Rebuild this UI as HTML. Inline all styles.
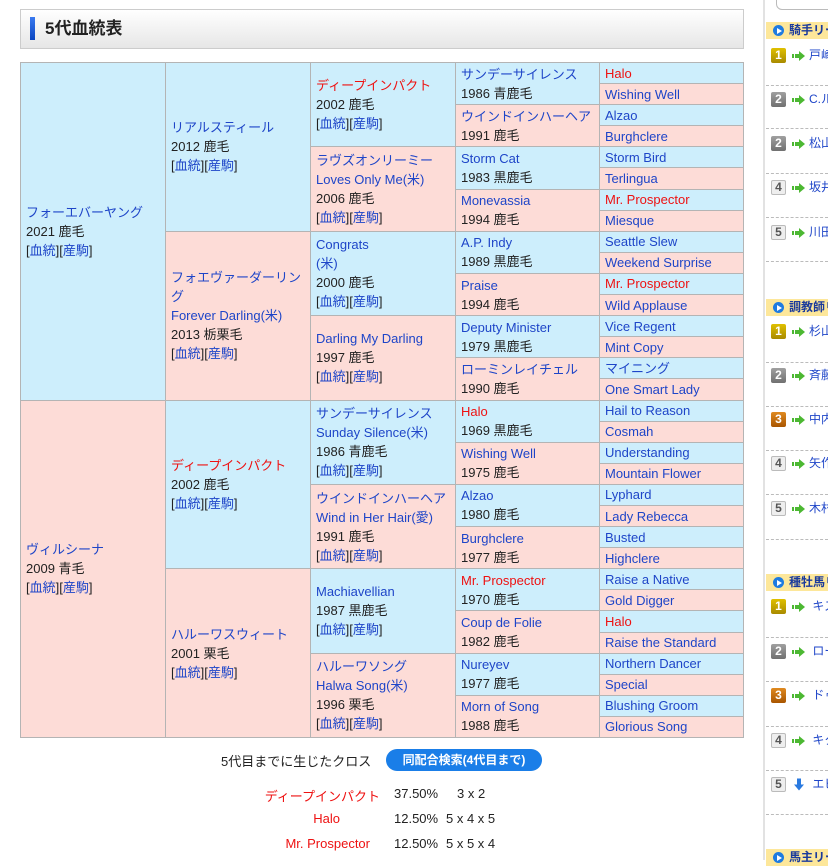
<!DOCTYPE html>
<html><head><meta charset="utf-8"><style>
*{margin:0;padding:0;box-sizing:border-box}
body{width:828px;height:860px;background:#fff;font-family:"Liberation Sans","Noto Sans CJK JP",sans-serif;position:relative;overflow:hidden;color:#222;font-size:13px}
a{color:#1e45c8;text-decoration:none}
.r{color:#ee1111}
.hdr{position:absolute;left:20px;top:9px;width:724px;height:40px;border:1px solid #ccc;background:linear-gradient(#fff,#e6e6e6)}
.hdr .bar{position:absolute;left:9px;top:7px;width:5px;height:23px;background:linear-gradient(#3a7af0,#0a45c0)}
.hdr .t{position:absolute;left:24px;top:8px;font-size:17px;line-height:22px;font-weight:bold;color:#222}
.grid{position:absolute;left:20px;top:62px;width:724px;height:676px;background:#b4b4b4;padding:1px;display:grid;grid-template-columns:144px 144px 144px 143px 143px;grid-template-rows:repeat(32,1fr);gap:1px}
.grid div{padding:0 5px;display:flex;flex-direction:column;justify-content:center;line-height:19px;font-size:13px}
.b{background:#cdeefc}.p{background:#fddcd7}
.cross{position:absolute;font-size:13px}
.btn{position:absolute;left:386px;top:749px;width:156px;height:22px;border-radius:11px;background:#1a7ee8;color:#fff;font-weight:bold;font-size:12px;text-align:center;line-height:22px}
.side{position:absolute;left:763px;top:0;width:2px;height:860px;background:#e2e2e2}
.search{position:absolute;left:776px;top:-10px;width:60px;height:20px;border:1px solid #bbb;border-radius:6px}
.sh{position:absolute;left:766px;width:62px;height:17px;background:#fde79a;font-size:12px;font-weight:bold;color:#1a3a9c;line-height:17px;padding-left:23px;white-space:nowrap;overflow:hidden}
.sh:before{content:"";position:absolute;left:7px;top:3px;width:11px;height:11px;border-radius:50%;background:#1e7be0}
.sh:after{content:"";position:absolute;left:11px;top:5.5px;border-left:5px solid #fff;border-top:3px solid transparent;border-bottom:3px solid transparent}
.it{position:absolute;left:766px;width:62px;height:20px;white-space:nowrap;overflow:hidden}
.rk{position:absolute;left:5px;top:0;width:15px;height:15px;border-radius:2px;font-size:12px;font-weight:bold;color:#fff;text-align:center;line-height:15px}
.k1{background:linear-gradient(#e0c000,#a88a00)}.k2{background:linear-gradient(#a0a0a0,#707070)}.k3{background:linear-gradient(#e08a20,#a85500)}.k4{background:#eee;border:1px solid #bbb;color:#555;line-height:13px}
.ar{position:absolute;left:26px;top:3px;width:14px;height:10px}
.nm{position:absolute;left:43px;top:0;font-size:12px;color:#1e45c8;line-height:15px}
.dl{position:absolute;left:766px;width:62px;border-top:1px dashed #bbb}
</style></head><body>
<div class="hdr"><div class="bar"></div><div class="t">5代血統表</div></div>
<div class="grid">
<div class="b" style="grid-area:1/1/span 16"><a>フォーエバーヤング</a><span>2021 鹿毛</span><span>[<a>血統</a>][<a>産駒</a>]</span></div>
<div class="p" style="grid-area:17/1/span 16"><a>ヴィルシーナ</a><span>2009 青毛</span><span>[<a>血統</a>][<a>産駒</a>]</span></div>
<div class="b" style="grid-area:1/2/span 8"><a>リアルスティール</a><span>2012 鹿毛</span><span>[<a>血統</a>][<a>産駒</a>]</span></div>
<div class="p" style="grid-area:9/2/span 8"><a>フォエヴァーダーリング</a><a>Forever Darling(米)</a><span>2013 栃栗毛</span><span>[<a>血統</a>][<a>産駒</a>]</span></div>
<div class="b" style="grid-area:17/2/span 8"><a class="r">ディープインパクト</a><span>2002 鹿毛</span><span>[<a>血統</a>][<a>産駒</a>]</span></div>
<div class="p" style="grid-area:25/2/span 8"><a>ハルーワスウィート</a><span>2001 栗毛</span><span>[<a>血統</a>][<a>産駒</a>]</span></div>
<div class="b" style="grid-area:1/3/span 4"><a class="r">ディープインパクト</a><span>2002 鹿毛</span><span>[<a>血統</a>][<a>産駒</a>]</span></div>
<div class="p" style="grid-area:5/3/span 4"><a>ラヴズオンリーミー</a><a>Loves Only Me(米)</a><span>2006 鹿毛</span><span>[<a>血統</a>][<a>産駒</a>]</span></div>
<div class="b" style="grid-area:9/3/span 4"><a>Congrats</a><a>(米)</a><span>2000 鹿毛</span><span>[<a>血統</a>][<a>産駒</a>]</span></div>
<div class="p" style="grid-area:13/3/span 4"><a>Darling My Darling</a><span>1997 鹿毛</span><span>[<a>血統</a>][<a>産駒</a>]</span></div>
<div class="b" style="grid-area:17/3/span 4"><a>サンデーサイレンス</a><a>Sunday Silence(米)</a><span>1986 青鹿毛</span><span>[<a>血統</a>][<a>産駒</a>]</span></div>
<div class="p" style="grid-area:21/3/span 4"><a>ウインドインハーヘア</a><a>Wind in Her Hair(愛)</a><span>1991 鹿毛</span><span>[<a>血統</a>][<a>産駒</a>]</span></div>
<div class="b" style="grid-area:25/3/span 4"><a>Machiavellian</a><span>1987 黒鹿毛</span><span>[<a>血統</a>][<a>産駒</a>]</span></div>
<div class="p" style="grid-area:29/3/span 4"><a>ハルーワソング</a><a>Halwa Song(米)</a><span>1996 栗毛</span><span>[<a>血統</a>][<a>産駒</a>]</span></div>
<div class="b" style="grid-area:1/4/span 2"><a>サンデーサイレンス</a><span>1986 青鹿毛</span></div>
<div class="p" style="grid-area:3/4/span 2"><a>ウインドインハーヘア</a><span>1991 鹿毛</span></div>
<div class="b" style="grid-area:5/4/span 2"><a>Storm Cat</a><span>1983 黒鹿毛</span></div>
<div class="p" style="grid-area:7/4/span 2"><a>Monevassia</a><span>1994 鹿毛</span></div>
<div class="b" style="grid-area:9/4/span 2"><a>A.P. Indy</a><span>1989 黒鹿毛</span></div>
<div class="p" style="grid-area:11/4/span 2"><a>Praise</a><span>1994 鹿毛</span></div>
<div class="b" style="grid-area:13/4/span 2"><a>Deputy Minister</a><span>1979 黒鹿毛</span></div>
<div class="p" style="grid-area:15/4/span 2"><a>ローミンレイチェル</a><span>1990 鹿毛</span></div>
<div class="b" style="grid-area:17/4/span 2"><a class="r">Halo</a><span>1969 黒鹿毛</span></div>
<div class="p" style="grid-area:19/4/span 2"><a>Wishing Well</a><span>1975 鹿毛</span></div>
<div class="b" style="grid-area:21/4/span 2"><a>Alzao</a><span>1980 鹿毛</span></div>
<div class="p" style="grid-area:23/4/span 2"><a>Burghclere</a><span>1977 鹿毛</span></div>
<div class="b" style="grid-area:25/4/span 2"><a class="r">Mr. Prospector</a><span>1970 鹿毛</span></div>
<div class="p" style="grid-area:27/4/span 2"><a>Coup de Folie</a><span>1982 鹿毛</span></div>
<div class="b" style="grid-area:29/4/span 2"><a>Nureyev</a><span>1977 鹿毛</span></div>
<div class="p" style="grid-area:31/4/span 2"><a>Morn of Song</a><span>1988 鹿毛</span></div>
<div class="b" style="grid-area:1/5"><a class="r">Halo</a></div>
<div class="p" style="grid-area:2/5"><a>Wishing Well</a></div>
<div class="b" style="grid-area:3/5"><a>Alzao</a></div>
<div class="p" style="grid-area:4/5"><a>Burghclere</a></div>
<div class="b" style="grid-area:5/5"><a>Storm Bird</a></div>
<div class="p" style="grid-area:6/5"><a>Terlingua</a></div>
<div class="b" style="grid-area:7/5"><a class="r">Mr. Prospector</a></div>
<div class="p" style="grid-area:8/5"><a>Miesque</a></div>
<div class="b" style="grid-area:9/5"><a>Seattle Slew</a></div>
<div class="p" style="grid-area:10/5"><a>Weekend Surprise</a></div>
<div class="b" style="grid-area:11/5"><a class="r">Mr. Prospector</a></div>
<div class="p" style="grid-area:12/5"><a>Wild Applause</a></div>
<div class="b" style="grid-area:13/5"><a>Vice Regent</a></div>
<div class="p" style="grid-area:14/5"><a>Mint Copy</a></div>
<div class="b" style="grid-area:15/5"><a>マイニング</a></div>
<div class="p" style="grid-area:16/5"><a>One Smart Lady</a></div>
<div class="b" style="grid-area:17/5"><a>Hail to Reason</a></div>
<div class="p" style="grid-area:18/5"><a>Cosmah</a></div>
<div class="b" style="grid-area:19/5"><a>Understanding</a></div>
<div class="p" style="grid-area:20/5"><a>Mountain Flower</a></div>
<div class="b" style="grid-area:21/5"><a>Lyphard</a></div>
<div class="p" style="grid-area:22/5"><a>Lady Rebecca</a></div>
<div class="b" style="grid-area:23/5"><a>Busted</a></div>
<div class="p" style="grid-area:24/5"><a>Highclere</a></div>
<div class="b" style="grid-area:25/5"><a>Raise a Native</a></div>
<div class="p" style="grid-area:26/5"><a>Gold Digger</a></div>
<div class="b" style="grid-area:27/5"><a class="r">Halo</a></div>
<div class="p" style="grid-area:28/5"><a>Raise the Standard</a></div>
<div class="b" style="grid-area:29/5"><a>Northern Dancer</a></div>
<div class="p" style="grid-area:30/5"><a>Special</a></div>
<div class="b" style="grid-area:31/5"><a>Blushing Groom</a></div>
<div class="p" style="grid-area:32/5"><a>Glorious Song</a></div>
</div>

<div class="cross" style="left:221px;top:751px">5代目までに生じたクロス</div>
<div class="btn">同配合検索(4代目まで)</div>
<div class="cross r" style="left:200px;width:180px;text-align:right;top:786px">ディープインパクト</div>
<div class="cross" style="left:394px;top:786px">37.50%</div><div class="cross" style="left:457px;top:786px">3 x 2</div>
<div class="cross r" style="left:200px;width:140px;text-align:right;top:811px">Halo</div>
<div class="cross" style="left:394px;top:811px">12.50%</div><div class="cross" style="left:446px;top:811px">5 x 4 x 5</div>
<div class="cross r" style="left:200px;width:170px;text-align:right;top:836px">Mr. Prospector</div>
<div class="cross" style="left:394px;top:836px">12.50%</div><div class="cross" style="left:446px;top:836px">5 x 5 x 4</div>

<div class="side"></div>
<div class="search"></div>
<div class="sh" style="top:22px">騎手リーディング</div>
<div class="sh" style="top:299px">調教師リーディング</div>
<div class="sh" style="top:574px">種牡馬リーディング</div>
<div class="sh" style="top:849px">馬主リーディング</div>

<svg width="0" height="0" style="position:absolute"><defs><g id="ga"><rect x="0" y="3" width="2" height="4" fill="#4cb832"/><rect x="3" y="3" width="4" height="4" fill="#4cb832"/><path d="M7 0 L13 5 L7 10 Z" fill="#4cb832"/></g></defs></svg>

<div class="it" style="top:48px"><div class="rk k1">1</div><svg class="ar"><use href="#ga"/></svg><div class="nm">戸崎圭太</div></div>
<div class="dl" style="top:85px"></div>
<div class="it" style="top:92px"><div class="rk k2">2</div><svg class="ar"><use href="#ga"/></svg><div class="nm">C.ルメール</div></div>
<div class="dl" style="top:128px"></div>
<div class="it" style="top:136px"><div class="rk k2">2</div><svg class="ar"><use href="#ga"/></svg><div class="nm">松山弘平</div></div>
<div class="dl" style="top:173px"></div>
<div class="it" style="top:180px"><div class="rk k4">4</div><svg class="ar"><use href="#ga"/></svg><div class="nm">坂井瑠星</div></div>
<div class="dl" style="top:217px"></div>
<div class="it" style="top:225px"><div class="rk k4">5</div><svg class="ar"><use href="#ga"/></svg><div class="nm">川田将雅</div></div>
<div class="dl" style="top:261px"></div>

<div class="it" style="top:324px"><div class="rk k1">1</div><svg class="ar"><use href="#ga"/></svg><div class="nm">杉山晴紀</div></div>
<div class="dl" style="top:362px"></div>
<div class="it" style="top:368px"><div class="rk k2">2</div><svg class="ar"><use href="#ga"/></svg><div class="nm">斉藤崇史</div></div>
<div class="dl" style="top:406px"></div>
<div class="it" style="top:412px"><div class="rk k3">3</div><svg class="ar"><use href="#ga"/></svg><div class="nm">中内田充正</div></div>
<div class="dl" style="top:450px"></div>
<div class="it" style="top:456px"><div class="rk k4">4</div><svg class="ar"><use href="#ga"/></svg><div class="nm">矢作芳人</div></div>
<div class="dl" style="top:494px"></div>
<div class="it" style="top:501px"><div class="rk k4">5</div><svg class="ar"><use href="#ga"/></svg><div class="nm">木村哲也</div></div>
<div class="dl" style="top:539px"></div>

<div class="it" style="top:599px"><div class="rk k1">1</div><svg class="ar"><use href="#ga"/></svg><div class="nm">&nbsp;キズナ</div></div>
<div class="dl" style="top:637px"></div>
<div class="it" style="top:644px"><div class="rk k2">2</div><svg class="ar"><use href="#ga"/></svg><div class="nm">&nbsp;ロードカナロア</div></div>
<div class="dl" style="top:681px"></div>
<div class="it" style="top:688px"><div class="rk k3">3</div><svg class="ar"><use href="#ga"/></svg><div class="nm">&nbsp;ドゥラメンテ</div></div>
<div class="dl" style="top:726px"></div>
<div class="it" style="top:733px"><div class="rk k4">4</div><svg class="ar"><use href="#ga"/></svg><div class="nm">&nbsp;キタサンブラック</div></div>
<div class="dl" style="top:770px"></div>
<div class="it" style="top:777px"><div class="rk k4">5</div><svg class="ar" viewBox="0 0 14 12" style="top:1px;height:13px"><rect x="5" y="0" width="4" height="6" fill="#2a7ae0"/><path d="M2 6 L12 6 L7 12 Z" fill="#2a7ae0"/></svg><div class="nm">&nbsp;エピファネイア</div></div>
<div class="dl" style="top:814px"></div>
</body></html>
